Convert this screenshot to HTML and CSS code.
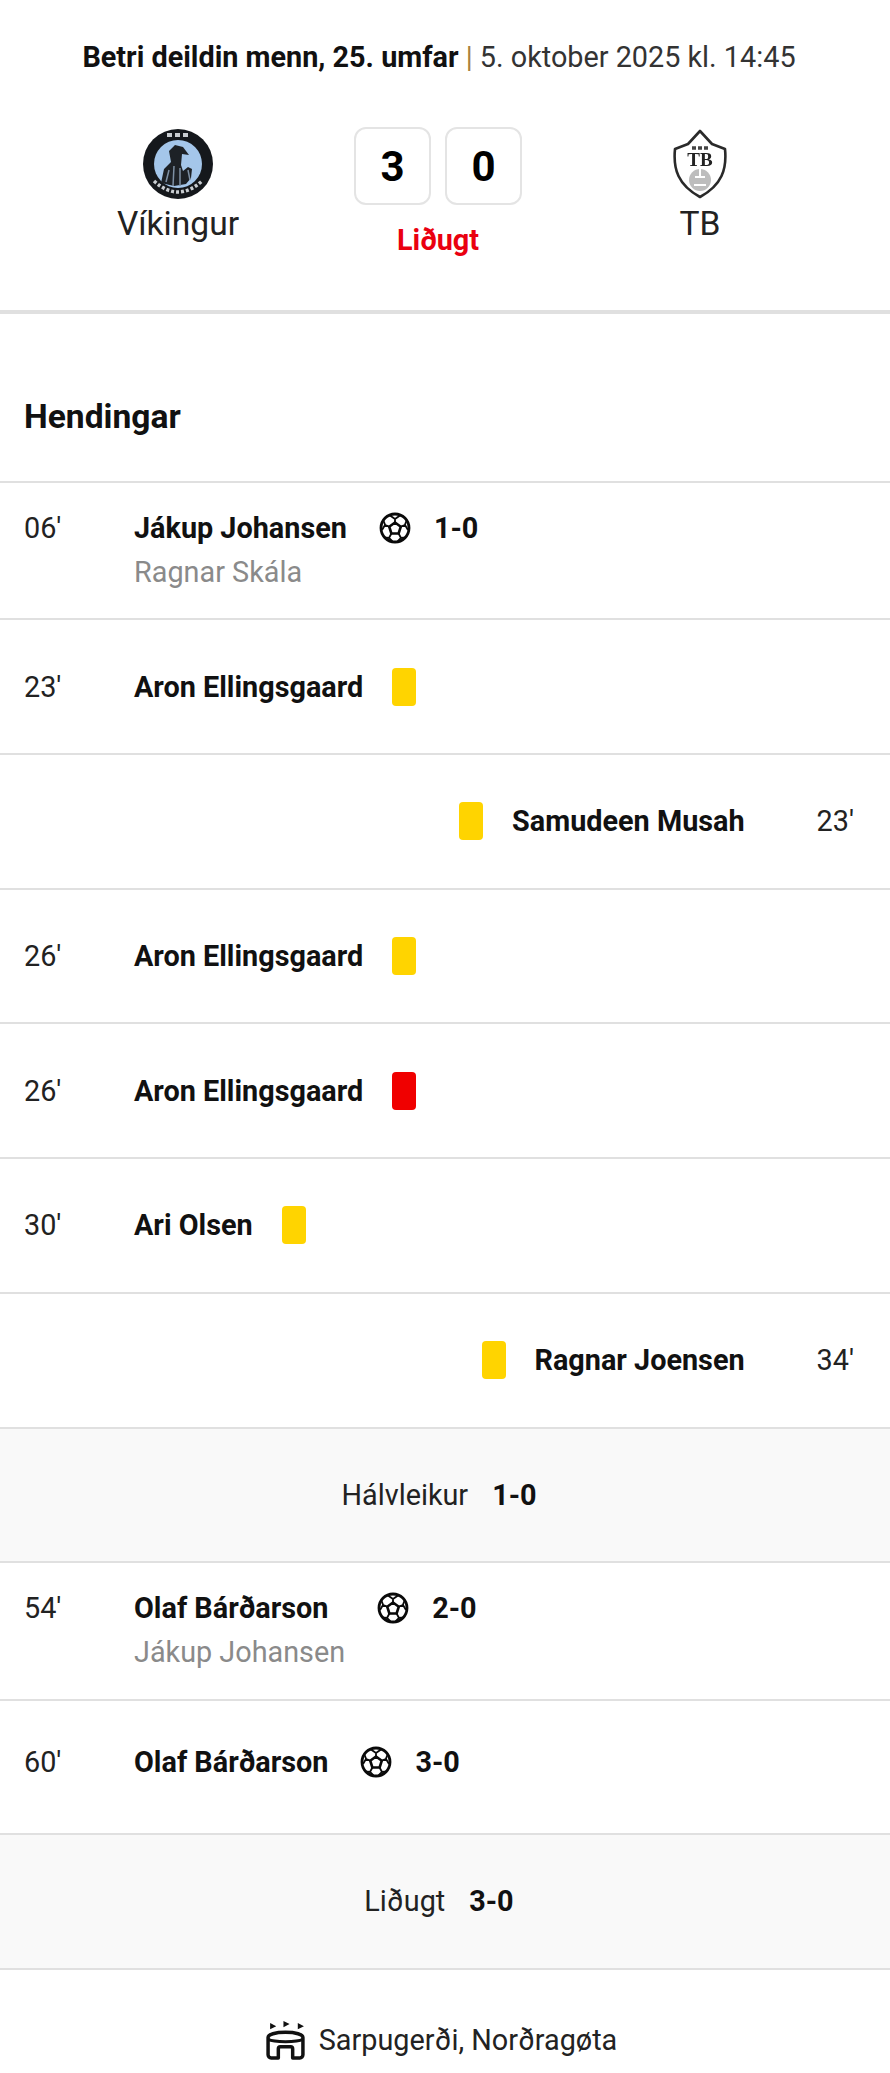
FILE: index.html
```html
<!DOCTYPE html>
<html lang="fo">
<head>
<meta charset="utf-8">
<title>Víkingur - TB</title>
<link rel="stylesheet" href="styles.css">
</head>
<body>
<svg width="0" height="0" class="defs">
  <defs>
    <symbol id="ball" viewBox="0 0 32 32">
      <circle cx="16" cy="16" r="14" fill="none" stroke="#0a0a0a" stroke-width="2.800"/>
      <path d="M16 10.500l5.800 4.200-2.200 6.800h-7.200l-2.200-6.800z" fill="none" stroke="#0a0a0a" stroke-width="2.600" stroke-linejoin="round"/>
      <path d="M16 10.500V7l-5-3.500M16 7l5-3.500M21.800 14.700l4-1.700 2-5M26 13l3 5M19.600 21.500l2.400 4.500 5-.5M22 26l-3.500 3.500M12.400 21.500L10 26l-5-.5M10 26l3.500 3.500M10.200 14.700l-4-1.700-2-5M6 13l-3 5" fill="none" stroke="#0a0a0a" stroke-width="1.800"/>
    </symbol>
  </defs>
</svg>
<header class="match">
  <p class="meta"><b>Betri deildin menn, 25. umfar</b> <span class="pipe">|</span> 5. oktober 2025 kl. 14:45</p>
  <div class="teams">
    <div class="team">
      <svg class="crest" viewBox="0 0 72 72" aria-hidden="true">
        <circle cx="36" cy="36" r="35" fill="#15181c"/>
        <circle cx="36" cy="36" r="24" fill="#a4c6ea"/>
        <path d="M19 55l3-14 7-7-2-11 6-6 8 2 6 8-7-1-1 11 2 6 5-4 4 2-1 9-5 6-12 2z" fill="#1d2126"/>
        <path d="M24 54l3-12M31 58l1-20M38 58V40M46 42l2 10" stroke="#7d8fa3" stroke-width="1.500" fill="none"/>
        <path d="M25 7h22" stroke="#c9cdd1" stroke-width="4" stroke-dasharray="5 3"/>
        <path d="M12 53q24 22 48 0" stroke="#c9cdd1" stroke-width="3.500" stroke-dasharray="3 2" fill="none"/>
      </svg>
      <span class="team-name">Víkingur</span>
    </div>
    <div class="score-col">
      <div class="score"><span class="digit">3</span><span class="digit">0</span></div>
      <span class="status">Liðugt</span>
    </div>
    <div class="team">
      <svg class="crest" viewBox="0 0 72 72" aria-hidden="true">
        <path d="M36 3l12 13 13 5c2 20-3 36-25 48C14 57 9 41 11 21l13-5z" fill="#fff" stroke="#2a2a2a" stroke-width="2.600" stroke-linejoin="round"/>
        <path d="M28 20h16" stroke="#444" stroke-width="3.500" stroke-dasharray="4 2"/>
        <text x="36" y="38" class="crest-text">TB</text>
        <circle cx="36" cy="52" r="11" fill="#bdbdbd"/>
        <path d="M36 40v10M31 49h10M30 57h12" stroke="#fff" stroke-width="2"/>
      </svg>
      <span class="team-name">TB</span>
    </div>
  </div>
</header>

<main class="events">
  <h2 class="title">Hendingar</h2>

  <div class="row tall">
    <span class="min">06'</span>
    <div class="body">
      <b class="player">Jákup Johansen</b>
      <div class="assist">Ragnar Skála</div>
    </div>
    <svg class="ball"><use href="#ball"/></svg><b class="goal">1-0</b>
  </div>
  <div class="row">
    <span class="min">23'</span>
    <b class="player">Aron Ellingsgaard</b><i class="card yellow"></i>
  </div>
  <div class="row away">
    <i class="card yellow"></i><b class="player">Samudeen Musah</b><span class="min">23'</span>
  </div>
  <div class="row">
    <span class="min">26'</span>
    <b class="player">Aron Ellingsgaard</b><i class="card yellow"></i>
  </div>
  <div class="row">
    <span class="min">26'</span>
    <b class="player">Aron Ellingsgaard</b><i class="card red"></i>
  </div>
  <div class="row">
    <span class="min">30'</span>
    <b class="player">Ari Olsen</b><i class="card yellow"></i>
  </div>
  <div class="row away">
    <i class="card yellow"></i><b class="player">Ragnar Joensen</b><span class="min">34'</span>
  </div>
  <div class="row phase"><span>Hálvleikur</span><b>1-0</b></div>
  <div class="row tall">
    <span class="min">54'</span>
    <div class="body">
      <b class="player">Olaf Bárðarson</b>
      <div class="assist">Jákup Johansen</div>
    </div>
    <svg class="ball"><use href="#ball"/></svg><b class="goal">2-0</b>
  </div>
  <div class="row solo">
    <span class="min">60'</span>
    <b class="player">Olaf Bárðarson</b>
    <svg class="ball"><use href="#ball"/></svg><b class="goal">3-0</b>
  </div>
  <div class="row phase"><span>Liðugt</span><b>3-0</b></div>
</main>

<footer class="venue">
  <svg class="stadium" viewBox="0 0 40 38" aria-hidden="true">
    <path d="M3 16c0-3 7-5 17-5s17 2 17 5v17a3 3 0 0 1-3 3h-7v-9a2 2 0 0 0-2-2H15a2 2 0 0 0-2 2v9H6a3 3 0 0 1-3-3z" fill="none" stroke="#111" stroke-width="3.400" stroke-linejoin="round"/>
    <path d="M3 18c6 3 28 3 34 0" fill="none" stroke="#111" stroke-width="3"/>
    <path d="M5 2l6 3-6 3zM18 0l6 3-6 3zM32 2l6 3-6 3z" fill="#111"/>
  </svg>
  <span>Sarpugerði, Norðragøta</span>
</footer>
</body>
</html>
```
FILE: styles.css
```css
* { box-sizing: border-box; }
html, body { margin: 0; padding: 0; }
body { background: #fff; color: #111; font-family: Roboto, "Liberation Sans", sans-serif; font-size: 28.8px; width: 890px; }
.defs { position: absolute; }
.match { height: 314px; padding-top: 40px; border-bottom: 4px solid #e0e0e0; }
.meta { margin: 0; padding-right: 12px; text-align: center; font-size: 28.8px; line-height: 34px; height: 34px; color: #333; white-space: nowrap; }
.meta b { color: #111; font-weight: 700; }
.pipe { color: #a9803f; }
.teams { display: grid; grid-template-columns: 356px 164px 360px; margin-top: 54px; }
.team { display: flex; flex-direction: column; align-items: center; }
.crest { width: 72px; height: 72px; display: block; filter: blur(0.5px); }
.crest-text { font-family: "Liberation Serif", serif; font-weight: 700; font-size: 19px; text-anchor: middle; fill: #222; }
.team-name { font-size: 33.6px; line-height: 40px; margin-top: 4px; color: #222; }
.score-col { display: flex; flex-direction: column; align-items: center; }
.score { display: flex; gap: 14px; margin-top: -1px; }
.digit { width: 77px; height: 78px; border: 2px solid #e4e4e4; border-radius: 12px; font-size: 42px; font-weight: 700; display: flex; align-items: center; justify-content: center; color: #000; }
.status { color: #ea0010; font-size: 28.8px; font-weight: 700; line-height: 36px; margin-top: 17px; }
.title { margin: 0; font-size: 33.6px; font-weight: 700; line-height: 40px; padding: 83px 24px 0; height: 169px; border-bottom: 2px solid #e0e0e0; color: #111; }
.row { height: 134.7px; border-bottom: 2px solid #e0e0e0; display: flex; align-items: center; padding: 0 36px 0 24px; }
.row.tall { height: 137.4px; align-items: flex-start; padding-top: 29px; }
.row.solo { align-items: flex-start; padding-top: 45px; }
.min { width: 110px; flex: none; line-height: 32px; color: #222; }
.player { display: block; font-weight: 700; line-height: 32px; color: #111; white-space: nowrap; }
.assist { line-height: 32px; color: #8a8a8a; margin-top: 12px; white-space: nowrap; }
.ball { width: 32px; height: 32px; margin-left: 32px; flex: none; }
.goal { font-weight: 700; margin-left: 23px; line-height: 32px; }
.card { display: block; flex: none; width: 24px; height: 38px; border-radius: 4px; margin-left: 29px; }
.yellow { background: #ffd400; }
.red { background: #f00000; }
.away { justify-content: flex-end; }
.away .min { width: auto; margin-left: 72px; }
.away .card { margin-left: 0; margin-right: 29px; }
.row.phase { height: 134.6px; justify-content: center; gap: 24px; background: #f9f9f9; padding: 0 12px 0 0; }
.phase span { color: #222; }
.venue { display: flex; align-items: center; justify-content: center; gap: 13px; height: 103px; padding: 38px 8px 0 0; color: #222; }
.stadium { width: 41px; height: 39px; flex: none; }
```
